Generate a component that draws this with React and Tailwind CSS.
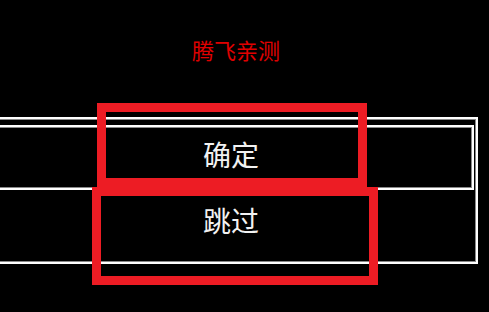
export default function App() {
  const cjk = { fontFamily: '"Noto Sans CJK SC", "Noto Sans", sans-serif' };
  return (
    <div className="relative w-[489px] h-[312px] overflow-hidden bg-black" style={cjk}>
      <div className="pt-[38px] w-[472px] text-center text-[22px] leading-[22px] text-[#e00000]">腾飞亲测</div>
      <div className="mt-[57px] ml-[-15px] w-[493px] h-[147px] border-2 border-white">
        <div className="h-full border border-[#8a8a8a] pt-[5px] pr-[1px] flex flex-col">
          <div className="h-[65px] border-2 border-white">
            <div className="h-full border-[1px] border-[#8a8a8a] flex items-center justify-center pb-[7px] text-[28px] text-[#f2f2f2]">
              确定
            </div>
          </div>
          <div className="flex-1 flex items-start justify-center pt-[15px] text-[28px] text-[#f2f2f2] leading-[30px]">
            跳过
          </div>
        </div>
      </div>
      <div className="absolute left-[97px] top-[103px] w-[270px] h-[84px] border-[9px] border-[#ed1c24]" />
      <div className="absolute left-[92px] top-[187px] w-[286px] h-[98px] border-[9px] border-[#ed1c24]" />
    </div>
  );
}
